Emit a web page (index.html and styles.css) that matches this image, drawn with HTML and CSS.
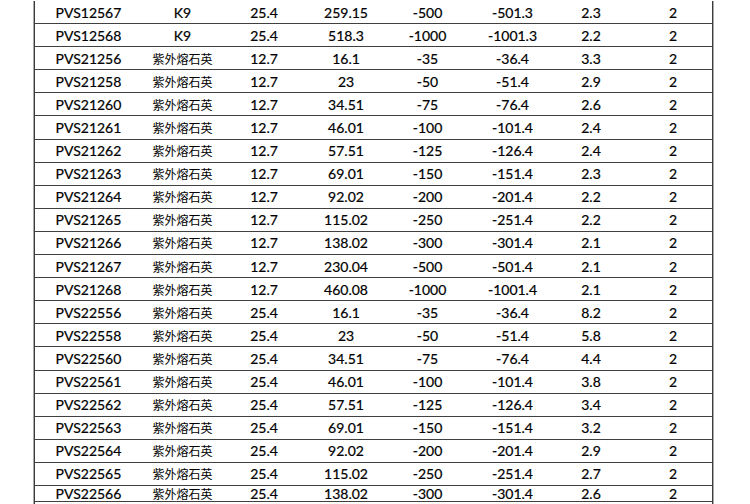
FILE: index.html
```html
<!DOCTYPE html>
<html lang="zh-CN">
<head>
<meta charset="utf-8">
<title>PVS 产品参数</title>
<link rel="stylesheet" href="styles.css">
</head>
<body>
<table class="spec">
<colgroup>
<col class="c1"><col class="c2"><col class="c3"><col class="c4"><col class="c5"><col class="c6"><col class="c7"><col class="c8">
</colgroup>
<tbody>
<tr><td>PVS12567</td><td>K9</td><td>25.4</td><td>259.15</td><td>-500</td><td>-501.3</td><td>2.3</td><td class="last">2</td></tr>
<tr><td>PVS12568</td><td>K9</td><td>25.4</td><td>518.3</td><td>-1000</td><td>-1001.3</td><td>2.2</td><td class="last">2</td></tr>
<tr><td>PVS21256</td><td class="cn">紫外熔石英</td><td>12.7</td><td>16.1</td><td>-35</td><td>-36.4</td><td>3.3</td><td class="last">2</td></tr>
<tr><td>PVS21258</td><td class="cn">紫外熔石英</td><td>12.7</td><td>23</td><td>-50</td><td>-51.4</td><td>2.9</td><td class="last">2</td></tr>
<tr><td>PVS21260</td><td class="cn">紫外熔石英</td><td>12.7</td><td>34.51</td><td>-75</td><td>-76.4</td><td>2.6</td><td class="last">2</td></tr>
<tr><td>PVS21261</td><td class="cn">紫外熔石英</td><td>12.7</td><td>46.01</td><td>-100</td><td>-101.4</td><td>2.4</td><td class="last">2</td></tr>
<tr><td>PVS21262</td><td class="cn">紫外熔石英</td><td>12.7</td><td>57.51</td><td>-125</td><td>-126.4</td><td>2.4</td><td class="last">2</td></tr>
<tr><td>PVS21263</td><td class="cn">紫外熔石英</td><td>12.7</td><td>69.01</td><td>-150</td><td>-151.4</td><td>2.3</td><td class="last">2</td></tr>
<tr><td>PVS21264</td><td class="cn">紫外熔石英</td><td>12.7</td><td>92.02</td><td>-200</td><td>-201.4</td><td>2.2</td><td class="last">2</td></tr>
<tr><td>PVS21265</td><td class="cn">紫外熔石英</td><td>12.7</td><td>115.02</td><td>-250</td><td>-251.4</td><td>2.2</td><td class="last">2</td></tr>
<tr><td>PVS21266</td><td class="cn">紫外熔石英</td><td>12.7</td><td>138.02</td><td>-300</td><td>-301.4</td><td>2.1</td><td class="last">2</td></tr>
<tr><td>PVS21267</td><td class="cn">紫外熔石英</td><td>12.7</td><td>230.04</td><td>-500</td><td>-501.4</td><td>2.1</td><td class="last">2</td></tr>
<tr><td>PVS21268</td><td class="cn">紫外熔石英</td><td>12.7</td><td>460.08</td><td>-1000</td><td>-1001.4</td><td>2.1</td><td class="last">2</td></tr>
<tr><td>PVS22556</td><td class="cn">紫外熔石英</td><td>25.4</td><td>16.1</td><td>-35</td><td>-36.4</td><td>8.2</td><td class="last">2</td></tr>
<tr><td>PVS22558</td><td class="cn">紫外熔石英</td><td>25.4</td><td>23</td><td>-50</td><td>-51.4</td><td>5.8</td><td class="last">2</td></tr>
<tr><td>PVS22560</td><td class="cn">紫外熔石英</td><td>25.4</td><td>34.51</td><td>-75</td><td>-76.4</td><td>4.4</td><td class="last">2</td></tr>
<tr><td>PVS22561</td><td class="cn">紫外熔石英</td><td>25.4</td><td>46.01</td><td>-100</td><td>-101.4</td><td>3.8</td><td class="last">2</td></tr>
<tr><td>PVS22562</td><td class="cn">紫外熔石英</td><td>25.4</td><td>57.51</td><td>-125</td><td>-126.4</td><td>3.4</td><td class="last">2</td></tr>
<tr><td>PVS22563</td><td class="cn">紫外熔石英</td><td>25.4</td><td>69.01</td><td>-150</td><td>-151.4</td><td>3.2</td><td class="last">2</td></tr>
<tr><td>PVS22564</td><td class="cn">紫外熔石英</td><td>25.4</td><td>92.02</td><td>-200</td><td>-201.4</td><td>2.9</td><td class="last">2</td></tr>
<tr><td>PVS22565</td><td class="cn">紫外熔石英</td><td>25.4</td><td>115.02</td><td>-250</td><td>-251.4</td><td>2.7</td><td class="last">2</td></tr>
<tr class="short"><td>PVS22566</td><td class="cn">紫外熔石英</td><td>25.4</td><td>138.02</td><td>-300</td><td>-301.4</td><td>2.6</td><td class="last">2</td></tr>
</tbody>
</table>
</body>
</html>
```

FILE: styles.css
```css
html, body {
  margin: 0;
  padding: 0;
  background: #ffffff;
}

body {
  overflow: hidden;
  font-family: Lato, "Open Sans", "Noto Sans CJK SC", sans-serif;
  font-size: 14px;
  color: #000000;
}

.spec {
  margin: 1px 0 0 34px;
  padding: 0 0 12px 0;
  width: 679px;
  table-layout: fixed;
  border-collapse: separate;
  border-spacing: 0;
  border-left: 1px solid #3c3c3c;
  border-right: 1px solid #3c3c3c;
  box-shadow: -1px 0 0 #a9a9a9, 1px 0 0 #a9a9a9;
}

.c1 { width: 107px; }
.c2 { width: 81px; }
.c3 { width: 82px; }
.c4 { width: 82px; }
.c5 { width: 81px; }
.c6 { width: 89px; }
.c7 { width: 68px; }
.c8 { width: 87px; }

.spec td {
  box-sizing: border-box;
  height: 23.1px;
  padding: 0;
  border-bottom: 1px solid #404040;
  text-align: center;
  vertical-align: middle;
  white-space: nowrap;
  line-height: 15px;
  -webkit-text-stroke: 0.2px #000000;
}

.spec .short td {
  height: 16px;
}

.spec td.cn {
  font-family: "Noto Sans CJK SC", sans-serif;
  font-size: 12px;
  -webkit-text-stroke: 0;
}

.spec td.last {
  padding-left: 9px;
}
```
